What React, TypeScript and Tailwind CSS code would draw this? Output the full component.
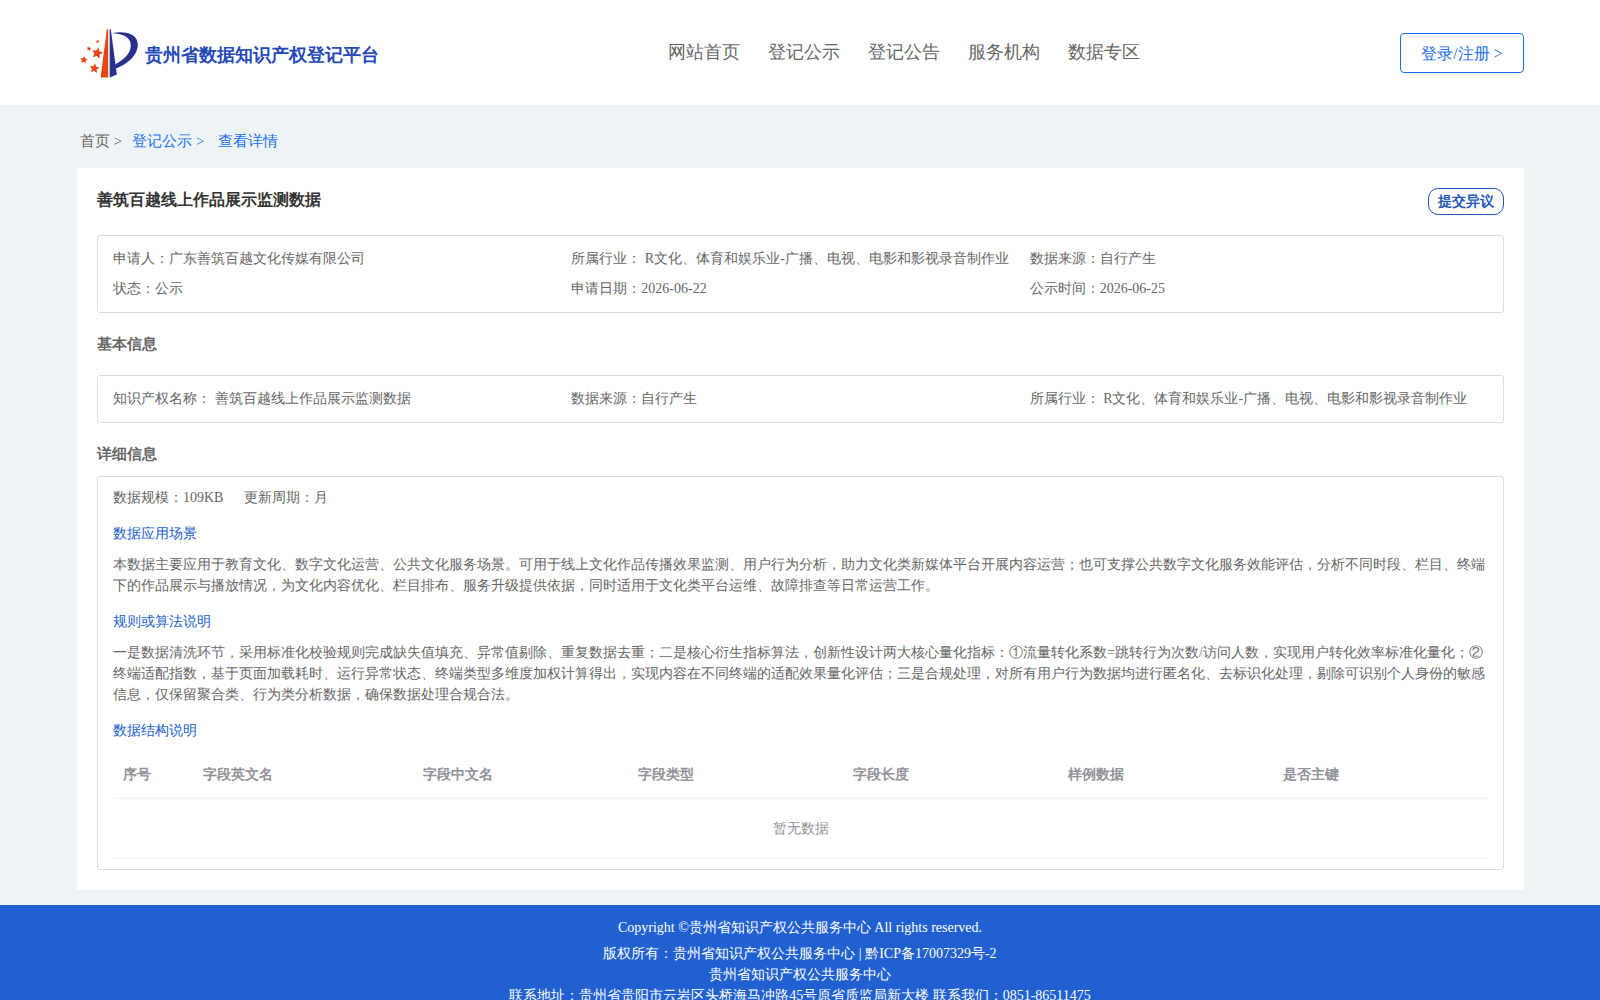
import React from "react";

const NAV = ["网站首页", "登记公示", "登记公告", "服务机构", "数据专区"];

const INDUSTRY = " R文化、体育和娱乐业-广播、电视、电影和影视录音制作业";

const SUMMARY: [string, string][] = [
  ["申请人", "广东善筑百越文化传媒有限公司"],
  ["所属行业", INDUSTRY],
  ["数据来源", "自行产生"],
  ["状态", "公示"],
  ["申请日期", "2026-06-22"],
  ["公示时间", "2026-06-25"],
];

const BASIC: [string, string][] = [
  ["知识产权名称", " 善筑百越线上作品展示监测数据"],
  ["数据来源", "自行产生"],
  ["所属行业", INDUSTRY],
];

const COLUMNS = ["序号", "字段英文名", "字段中文名", "字段类型", "字段长度", "样例数据", "是否主键"];
const COLUMN_WIDTHS = ["w-[80px]", "w-[220px]", "w-[215px]", "w-[215px]", "w-[215px]", "w-[215px]", ""];

/* Stars of the logo: centre, radius and tilt in degrees. */
const STARS = [
  { x: 20.2, y: 26.2, r: 6, tilt: 12 },
  { x: 12, y: 21.6, r: 2.6, tilt: 20 },
  { x: 20.7, y: 14.6, r: 1.9, tilt: 20 },
  { x: 6.8, y: 32.9, r: 4, tilt: 8 },
  { x: 17.4, y: 41.4, r: 5.3, tilt: 8 },
];

function starPoints(x: number, y: number, r: number, tilt: number) {
  return Array.from({ length: 10 }, (_, i) => {
    const a = ((i * 36 - 90 + tilt) * Math.PI) / 180;
    const d = i % 2 ? r * 0.46 : r;
    return `${x + d * Math.cos(a)},${y + d * Math.sin(a)}`;
  }).join(" ");
}

function Logo() {
  return (
    <svg viewBox="0 0 62 52" className="h-[52px] w-[62px] shrink-0" aria-hidden="true">
      <path d="M29.8 2.3 H31.2 V50.5 H23.6 Z" fill="#e84610" />
      <path d="M32.7 2.3 H33.8 L39.8 47.6 L32.7 50.5 Z" fill="#29308b" />
      <path
        d="M34.6 6.3 C48 3.2 60.8 6.8 60.8 17.5 C60.8 29 49 38.2 38.4 41.6 L38 37.4 C46 33.4 53.8 27 53.8 18.6 C53.8 10.4 47 6.8 34.6 6.3 Z"
        fill="#29308b"
      />
      {STARS.map((s) => (
        <polygon key={`${s.x}-${s.y}`} points={starPoints(s.x, s.y, s.r, s.tilt)} fill="#e84610" />
      ))}
    </svg>
  );
}

function InfoBox({ items }: { items: [string, string][] }) {
  return (
    <dl className="grid grid-cols-3 gap-y-[9px] rounded-[3px] border border-[#dcdcdc] px-[15px] pt-3 pb-[13px]">
      {items.map(([label, value]) => (
        <div key={label} className="whitespace-pre">
          <dt className="inline">{label}：</dt>
          <dd className="inline">{value}</dd>
        </div>
      ))}
    </dl>
  );
}

function Section({ title, children }: { title: string; children: React.ReactNode }) {
  return (
    <section className="mt-[15px]">
      <h3 className="mb-2.5 text-[#2060d0]">{title}</h3>
      {children}
    </section>
  );
}

export default function App() {
  return (
    <div className="bg-[#eef3f6] font-['Liberation_Serif',serif] text-[14px] leading-[21px] text-[#666]">
      <header className="flex h-[105px] items-center justify-between bg-white pr-19 pl-[77px]">
        <a href="#" className="flex items-center gap-1.5 pr-7">
          <Logo />
          <span className="pt-1 text-[18px] leading-6 font-bold text-[#2448b8]">贵州省数据知识产权登记平台</span>
        </a>
        <nav className="flex gap-7 pb-0.5 text-[18px] leading-6">
          {NAV.map((n) => (
            <a key={n} href="#">{n}</a>
          ))}
        </nav>
        <button type="button" className="h-10 w-31 rounded border border-[#1a6fee] pt-0.5 text-[16px] text-[#1a6fee]">
          登录/注册 &gt;
        </button>
      </header>

      <main className="pr-19 pb-[15px] pl-[77px]">
        <nav aria-label="breadcrumb" className="flex h-[63px] items-center pt-2.5 pl-[3px] text-[15px]">
          <a href="#">首页 &gt;</a>
          <a href="#" className="ml-2.5 text-[#1a6fee]">登记公示 &gt;</a>
          <a href="#" className="ml-3.5 text-[#1a6fee]">查看详情</a>
        </nav>

        <article className="bg-white p-5">
          <div className="flex h-[47px] items-start justify-between">
            <h1 className="text-[16px] leading-6 font-bold text-[#333]">善筑百越线上作品展示监测数据</h1>
            <button type="button" className="h-[27px] rounded-[10px] border border-[#1f57bd] px-[9px] font-bold text-[#1f57bd]">
              提交异议
            </button>
          </div>

          <InfoBox items={SUMMARY} />
          <h2 className="pt-[21px] pb-5 text-[15px] font-bold">基本信息</h2>
          <InfoBox items={BASIC} />
          <h2 className="pt-[21px] pb-[11px] text-[15px] font-bold">详细信息</h2>

          <div className="rounded-[3px] border border-[#dcdcdc] px-[15px] py-2.5">
            <p className="flex gap-[21px]">
              <span>数据规模：109KB</span>
              <span>更新周期：月</span>
            </p>
            <Section title="数据应用场景">
              <p>
                本数据主要应用于教育文化、数字文化运营、公共文化服务场景。可用于线上文化作品传播效果监测、用户行为分析，助力文化类新媒体平台开展内容运营；也可支撑公共数字文化服务效能评估，分析不同时段、栏目、终端下的作品展示与播放情况，为文化内容优化、栏目排布、服务升级提供依据，同时适用于文化类平台运维、故障排查等日常运营工作。
              </p>
            </Section>
            <Section title="规则或算法说明">
              <p>
                一是数据清洗环节，采用标准化校验规则完成缺失值填充、异常值剔除、重复数据去重；二是核心衍生指标算法，创新性设计两大核心量化指标：①流量转化系数=跳转行为次数/访问人数，实现用户转化效率标准化量化；②终端适配指数，基于页面加载耗时、运行异常状态、终端类型多维度加权计算得出，实现内容在不同终端的适配效果量化评估；三是合规处理，对所有用户行为数据均进行匿名化、去标识化处理，剔除可识别个人身份的敏感信息，仅保留聚合类、行为类分析数据，确保数据处理合规合法。
              </p>
            </Section>
            <Section title="数据结构说明">
              <table className="w-full table-fixed text-[#909399]">
                <thead>
                  <tr className="h-[47px] border-b border-[#ebeef5]">
                    {COLUMNS.map((c, i) => (
                      <th key={c} scope="col" className={"px-2.5 text-left font-bold " + COLUMN_WIDTHS[i]}>{c}</th>
                    ))}
                  </tr>
                </thead>
                <tbody>
                  <tr className="h-15 border-b border-[#ebeef5]">
                    <td colSpan={7} className="text-center">暂无数据</td>
                  </tr>
                </tbody>
              </table>
            </Section>
          </div>
        </article>
      </main>

      <footer className="bg-[#2060d0] pt-3 pb-5 text-center text-white">
        <p className="mb-[5px]">Copyright ©贵州省知识产权公共服务中心 All rights reserved.</p>
        <p>版权所有：贵州省知识产权公共服务中心 | 黔ICP备17007329号-2</p>
        <p>贵州省知识产权公共服务中心</p>
        <p>联系地址：贵州省贵阳市云岩区头桥海马冲路45号原省质监局新大楼 联系我们：0851-86511475</p>
      </footer>
    </div>
  );
}
